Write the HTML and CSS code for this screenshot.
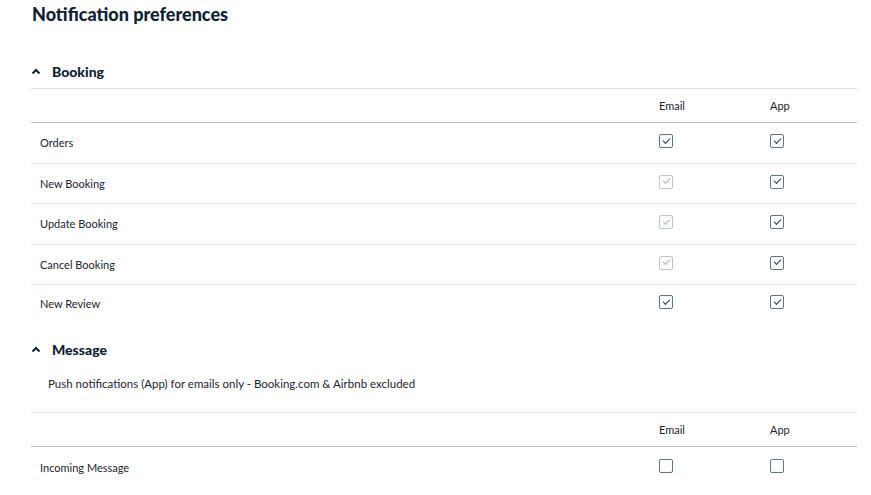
FILE: index.html
```html
<!DOCTYPE html>
<html>
<head>
<meta charset="utf-8">
<link rel="stylesheet" href="styles.css">
</head>
<body>
<div class="page">
  <h1 class="title">Notification preferences</h1>

  <section class="group group-booking">
    <div class="group-head">
      <svg class="chev" width="10" height="7" viewBox="0 0 10 7"><polyline points="1.5,5.5 5,2 8.5,5.5" fill="none" stroke="#0f2233" stroke-width="2"/></svg>
      <span class="group-title">Booking</span>
    </div>
    <div class="table">
      <div class="row head"><div class="cell"></div><div class="cell">Email</div><div class="cell">App</div></div>
      <div class="row"><div class="cell">Orders</div><div class="cell"><span class="cb on"></span></div><div class="cell"><span class="cb on"></span></div></div>
      <div class="row"><div class="cell">New Booking</div><div class="cell"><span class="cb on dis"></span></div><div class="cell"><span class="cb on"></span></div></div>
      <div class="row"><div class="cell">Update Booking</div><div class="cell"><span class="cb on dis"></span></div><div class="cell"><span class="cb on"></span></div></div>
      <div class="row"><div class="cell">Cancel Booking</div><div class="cell"><span class="cb on dis"></span></div><div class="cell"><span class="cb on"></span></div></div>
      <div class="row last"><div class="cell">New Review</div><div class="cell"><span class="cb on"></span></div><div class="cell"><span class="cb on"></span></div></div>
    </div>
  </section>

  <section class="group group-message">
    <div class="group-head">
      <svg class="chev" width="10" height="7" viewBox="0 0 10 7"><polyline points="1.5,5.5 5,2 8.5,5.5" fill="none" stroke="#0f2233" stroke-width="2"/></svg>
      <span class="group-title">Message</span>
    </div>
    <p class="note">Push notifications (App) for emails only - Booking.com &amp; Airbnb excluded</p>
    <div class="table">
      <div class="row head"><div class="cell"></div><div class="cell">Email</div><div class="cell">App</div></div>
      <div class="row end"><div class="cell">Incoming Message</div><div class="cell"><span class="cb"></span></div><div class="cell"><span class="cb"></span></div></div>
    </div>
  </section>
</div>
</body>
</html>
```

FILE: styles.css
```css
* { box-sizing: border-box; }
html, body { margin: 0; padding: 0; background: #fff; }
body {
  font-family: "Lato", "Open Sans", "Liberation Sans", sans-serif;
  color: #1d2430;
  width: 871px;
  height: 495px;
  overflow: hidden;
}
.page {
  padding: 3px 14px 0 31px;
}
.title {
  margin: 0;
  font-size: 18px;
  line-height: 22px;
  font-weight: 900;
  color: #0f2233;
  padding-left: 1px;
}
.group-booking { margin-top: 35px; }
.group-message { margin-top: 16px; }
.group-head {
  display: flex;
  align-items: center;
  height: 22px;
}
.chev { margin-left: 0; margin-right: 11px; }
.group-title {
  font-size: 14px;
  font-weight: 900;
  color: #0f2233;
}
.group-booking .group-head { margin-bottom: 6px; }
.group-booking .table { border-top: 1px solid #e0e0e3; }
.note {
  margin: 17px 0 0 17px;
  font-size: 11.5px;
  line-height: 14px;
  color: #1d2430;
}
.group-message .table {
  margin-top: 21px;
  border-top: 1px solid #e0e0e3;
}
.table { width: 826px; }
.row {
  display: grid;
  grid-template-columns: 619px 111px 96px;
  height: 40.5px;
  align-items: center;
  border-bottom: 1px solid #e0e0e3;
  font-size: 11px;
}
.row.head {
  height: 34px;
  border-bottom: 1px solid #bdbdbd;
}
.row.last { border-bottom: none; height: 37px; }
.row.end { border-bottom: none; height: 40px; }
.cell {
  padding-left: 9px;
  display: flex;
  align-items: center;
}
.cb {
  display: inline-block;
  width: 14px;
  height: 14px;
  border: 1.5px solid #5e7584;
  border-radius: 2px;
  position: relative;
  margin-top: -3px;
}
.cb.on::after {
  content: "";
  position: absolute;
  left: 3px;
  top: 2.5px;
  width: 6px;
  height: 3px;
  border-left: 1.6px solid #243c52;
  border-bottom: 1.6px solid #243c52;
  transform: rotate(-45deg);
}
.cb.dis { border-color: #b9c4cb; }
.cb.dis::after { border-color: #b0b8be; }
```
